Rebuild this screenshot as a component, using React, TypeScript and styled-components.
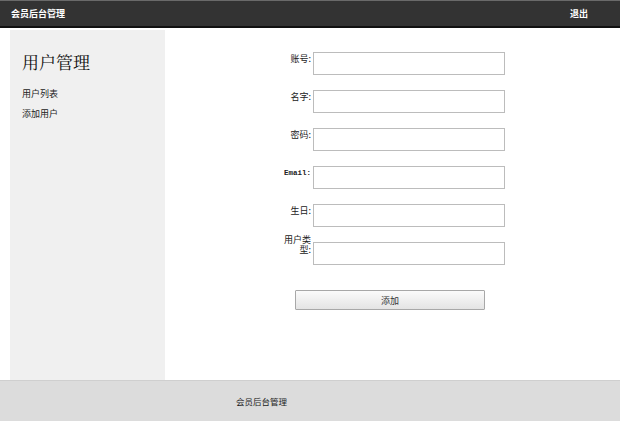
import React from "react";
import styled, { createGlobalStyle } from "styled-components";

const GlobalStyle = createGlobalStyle`
  body {
    margin: 0;
    background: #fff;
    font-family: "Noto Sans CJK SC", "Noto Sans", sans-serif;
    color: #222;
  }
`;

const fields = [
	{ label: "账号:" },
	{ label: "名字:" },
	{ label: "密码:" },
	{ label: "Email:", mono: true },
	{ label: "生日:" },
	{ label: "用户类型:", lift: true },
];

export default function App() {
	return (
		<>
			<GlobalStyle />
			<Header>
				<Brand>会员后台管理</Brand>
				<Logout>退出</Logout>
			</Header>
			<Body>
				<Sidebar>
					<SideTitle>用户管理</SideTitle>
					<SideLink>用户列表</SideLink>
					<SideLink>添加用户</SideLink>
				</Sidebar>
				<Content>
					<Form>
						{fields.map((f) => (
							<Row key={f.label}>
								<Label $mono={f.mono} $lift={f.lift}>
									{f.label}
								</Label>
								<Input type="text" />
							</Row>
						))}
						<Submit type="button">添加</Submit>
					</Form>
				</Content>
			</Body>
			<Footer>会员后台管理</Footer>
		</>
	);
}

const Header = styled.header`
  display: flex;
  align-items: center;
  justify-content: space-between;
  height: 25px;
  padding: 0 32px 0 11px;
  background: #333;
  border-top: 1px solid #6a6a6a;
  border-bottom: 2px solid #111;
  color: #fff;
  font-size: 9px;
  font-weight: 700;
`;

const Brand = styled.span``;

const Logout = styled.span`
  cursor: pointer;
`;

const Body = styled.div`
  display: flex;
  margin-top: 2px;
  height: 350px;
`;

const Sidebar = styled.aside`
  width: 143px;
  margin-left: 10px;
  padding: 0 0 0 12px;
  background: #f0f0f0;
`;

const SideTitle = styled.h2`
  margin: 22px 0 12px;
  font-family: "Noto Serif CJK SC", "Noto Sans CJK SC", serif;
  font-size: 17px;
  line-height: 20px;
  font-weight: 400;
  color: #111;
`;

const SideLink = styled.div`
  font-size: 9px;
  line-height: 20px;
  color: #222;
`;

const Content = styled.main`
  flex: 1;
`;

const Form = styled.form`
  display: flex;
  flex-direction: column;
  padding: 22px 0 0 119px;
  gap: 15px;
`;

const Row = styled.div`
  display: flex;
  align-items: flex-start;
`;

const Label = styled.label<{ $mono?: boolean; $lift?: boolean }>`
  display: flex;
  justify-content: flex-end;
  flex-shrink: 0;
  width: 27px;
  margin-right: 2px;
  margin-top: ${(p) => (p.$lift ? "-7px" : "2px")};
  text-align: right;
  font-size: ${(p) => (p.$mono ? "7.5px" : "9px")};
  font-family: ${(p) =>
		p.$mono
			? '"Liberation Mono", monospace'
			: '"Noto Sans CJK SC", sans-serif'};
  font-weight: ${(p) => (p.$mono ? 700 : 400)};
  line-height: 10px;
  color: #222;
  white-space: ${(p) => (p.$mono ? "nowrap" : "normal")};
`;

const Input = styled.input`
  box-sizing: border-box;
  width: 192px;
  height: 23px;
  margin: 0;
  padding: 0 4px;
  border: 1px solid #bcbcbc;
  background: #fff;
  font-size: 9px;
  outline: none;
`;

const Submit = styled.button`
  box-sizing: border-box;
  width: 190px;
  height: 20px;
  margin: 10px 0 0 11px;
  border: 1px solid #a8a8a8;
  border-radius: 1px;
  background: linear-gradient(#fbfbfb, #e4e4e4);
  font-family: "Noto Sans CJK SC", sans-serif;
  font-size: 9px;
  color: #333;
  cursor: pointer;
`;

const Footer = styled.footer`
  box-sizing: border-box;
  height: 41px;
  padding-left: 236px;
  display: flex;
  align-items: center;
  background: #dcdcdc;
  border-top: 1px solid #cfcfcf;
  font-size: 8.5px;
  color: #222;
`;
